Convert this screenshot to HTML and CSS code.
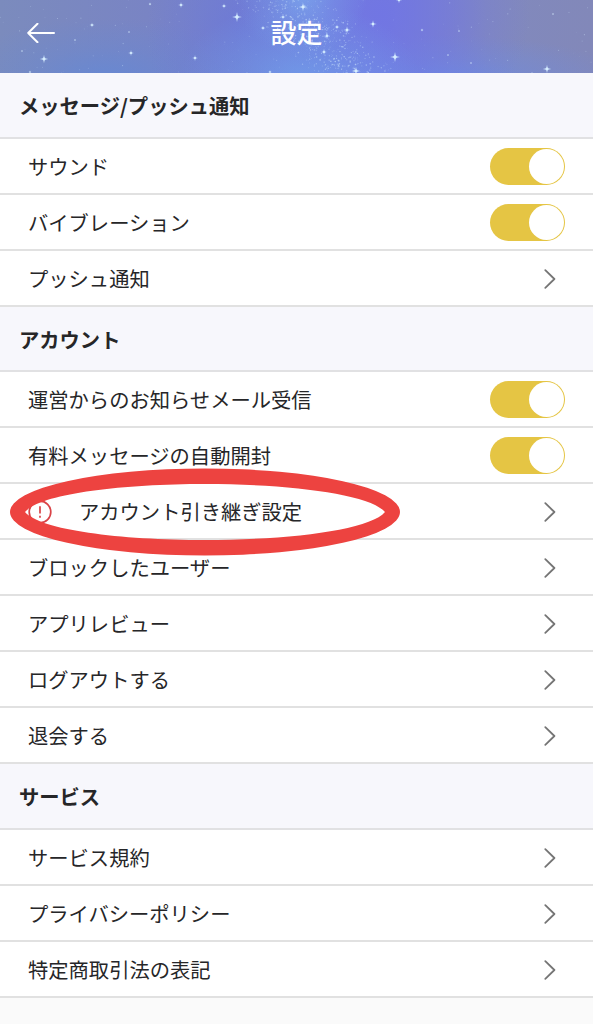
FILE: index.html
```
<!DOCTYPE html>
<html lang="ja">
<head>
<meta charset="utf-8">
<title>設定</title>
<link rel="stylesheet" href="styles.css">
</head>
<body>
<svg class="defs" aria-hidden="true">
  <symbol id="chevron" viewBox="0 0 12 20"><path d="M1.3 1.2 10.4 10 1.3 18.8"/></symbol>
  <symbol id="star" viewBox="-6 -6 12 12"><path d="M0-5 .8-.8 5 0 .8.8 0 5-.8.8-5 0-.8-.8Z"/><circle r="1.7"/></symbol>
</svg>
<header class="topbar">
  <svg class="sky" id="sky" viewBox="0 0 593 73" aria-hidden="true"></svg>
  <svg class="back" viewBox="0 0 28 20"><path d="M27 10H1.2M10.5.8 1.2 10l9.3 9.2"/></svg>
  <h1 class="title">設定</h1>
</header>
<main>
  <section>
    <h2 class="heading heading-first">メッセージ/プッシュ通知</h2>
    <ul class="list">
      <li class="row"><span>サウンド</span><i class="toggle"></i></li>
      <li class="row"><span>バイブレーション</span><i class="toggle"></i></li>
      <li class="row"><span>プッシュ通知</span><svg class="chevron"><use href="#chevron"/></svg></li>
    </ul>
  </section>
  <section>
    <h2 class="heading">アカウント</h2>
    <ul class="list">
      <li class="row"><span>運営からのお知らせメール受信</span><i class="toggle"></i></li>
      <li class="row"><span>有料メッセージの自動開封</span><i class="toggle"></i></li>
      <li class="row row-alert">
        <svg class="alert" viewBox="0 0 24 24"><circle cx="12" cy="12" r="10.8"/><path d="M12 6.3v7.2M12 15.8v2"/></svg>
        <span>アカウント引き継ぎ設定</span><svg class="chevron"><use href="#chevron"/></svg>
        <svg class="ring" viewBox="0 0 390 88"><path fill-rule="evenodd" d="M0 44a195 43.5 0 0 1 390 0 195 43.5 0 0 1-390 0ZM15 44C30 26 110 16 195 16s165 10 180 28c-15 18-95 28-180 28S30 62 15 44Z"/></svg>
      </li>
      <li class="row"><span>ブロックしたユーザー</span><svg class="chevron"><use href="#chevron"/></svg></li>
      <li class="row"><span>アプリレビュー</span><svg class="chevron"><use href="#chevron"/></svg></li>
      <li class="row"><span>ログアウトする</span><svg class="chevron"><use href="#chevron"/></svg></li>
      <li class="row"><span>退会する</span><svg class="chevron"><use href="#chevron"/></svg></li>
    </ul>
  </section>
  <section>
    <h2 class="heading heading-last">サービス</h2>
    <ul class="list">
      <li class="row"><span>サービス規約</span><svg class="chevron"><use href="#chevron"/></svg></li>
      <li class="row"><span>プライバシーポリシー</span><svg class="chevron"><use href="#chevron"/></svg></li>
      <li class="row"><span>特定商取引法の表記</span><svg class="chevron"><use href="#chevron"/></svg></li>
    </ul>
  </section>
</main>
<script src="sky.js"></script>
</body>
</html>
```
FILE: styles.css
```
* { box-sizing: border-box; }
body {
  margin: 0;
  background: #fafafa;
  color: #262628;
  font-family: "Noto Sans CJK JP", "Noto Sans", sans-serif;
}
.defs { display: none; }
.topbar {
  position: relative;
  display: grid;
  grid-template-columns: 1fr auto 1fr;
  align-items: center;
  height: 73px;
  padding: 0 27px 7px;
  overflow: hidden;
  background:
    radial-gradient(ellipse 65px 60px at 302px -4px, rgba(125,180,242,.65), rgba(125,180,242,.25) 50%, transparent),
    radial-gradient(ellipse 120px 75px at 300px 78px, rgba(112,160,235,.75), rgba(112,160,235,.35) 50%, transparent),
    radial-gradient(ellipse 150px 130px at 380px 15px, rgba(112,116,230,.75), rgba(112,116,230,.4) 50%, transparent),
    radial-gradient(ellipse 90px 110px at 236px 30px, rgba(108,119,216,.6), rgba(108,119,216,.25) 50%, transparent),
    radial-gradient(ellipse 150px 60px at 105px 78px, rgba(98,137,215,.75), rgba(98,137,215,.3) 50%, transparent),
    radial-gradient(ellipse 190px 45px at 440px 80px, rgba(108,140,228,.85), rgba(108,140,228,.35) 50%, transparent),
    linear-gradient(90deg, #7b8bbd, #7984c4 25%, #727fd2 43%, #757cda 65%, #8189be 82%, #8288b9);
}
.sky { position: absolute; inset: 0; width: 100%; height: 100%; fill: #d5edff; }
.back {
  position: relative;
  width: 28px;
  height: 20px;
  fill: none;
  stroke: #fff;
  stroke-width: 2;
  stroke-linecap: round;
  stroke-linejoin: round;
}
.title {
  position: relative;
  grid-column: 2;
  margin: 0;
  padding-bottom: 2px;
  color: #fff;
  font-size: 26px;
  font-weight: 500;
  line-height: 36px;
}
.heading {
  display: flex;
  align-items: center;
  height: 65px;
  margin: 0;
  padding: 0 19px;
  border-bottom: 2px solid #e1e1e3;
  background: #f7f7fc;
  font-size: 20.3px;
  font-weight: 700;
  line-height: 30px;
}
.heading-first,
.heading-last { height: 66px; }
.list { margin: 0; padding: 0; list-style: none; }
.row {
  position: relative;
  display: flex;
  align-items: center;
  justify-content: space-between;
  height: 56px;
  padding: 1px 28px 0;
  border-bottom: 2px solid #e1e1e1;
  background: #fff;
  font-size: 20.3px;
  line-height: 31px;
  white-space: nowrap;
}
.toggle {
  display: flex;
  justify-content: flex-end;
  width: 75px;
  height: 37px;
  padding: 1px;
  border-radius: 19px;
  background: #e5c544;
}
.toggle::after {
  content: "";
  width: 35px;
  height: 35px;
  border-radius: 50%;
  background: #fff;
}
.chevron {
  width: 12px;
  height: 20px;
  margin-right: 9px;
  fill: none;
  stroke: #757575;
  stroke-width: 1.8;
  stroke-linecap: round;
  stroke-linejoin: round;
}
.row-alert { justify-content: flex-start; }
.row-alert .chevron { margin-left: auto; }
.alert {
  width: 24px;
  height: 24px;
  margin-right: 27px;
  fill: none;
  stroke: #d94347;
  stroke-width: 1.7;
}
.ring {
  position: absolute;
  z-index: 1;
  top: -16px;
  left: 10px;
  width: 390px;
  height: 88px;
  fill: #ed4340;
}
```
FILE: sky.js
```
const sky = document.getElementById("sky");
let seed = 17;
const random = () => (seed = (seed * 16807) % 2147483647) / 2147483647;
const spread = () => random() + random() + random() - 1.5;

function dot(x, y, r, opacity) {
  return `<circle cx="${x}" cy="${y}" r="${r}" opacity="${opacity}"/>`;
}
function star(x, y, size) {
  return `<use href="#star" x="${x - size / 2}" y="${y - size / 2}" width="${size}" height="${size}"/>`;
}

let art = "";
// Faint dust over the whole bar
for (let i = 0; i < 120; i++) {
  art += dot(random() * 593, random() * 73, 0.3 + random() * 0.35, 0.15 + random() * 0.3);
}
// Dense band running down through the centre
for (let i = 0; i < 500; i++) {
  const y = random() * 73;
  art += dot(284 + y * 0.95 + spread() * 40, y, 0.35 + random() * 0.5, 0.12 + random() * 0.4);
}
const bright = [
  [44, 59, 10], [237, 17, 12], [181, 5, 7], [224, 6, 6], [92, 25, 6], [131, 53, 7],
  [195, 58, 7], [150, 4, 4], [129, 32, 3], [263, 28, 6], [283, 17, 6], [303, 7, 10],
  [347, 30, 9], [337, 27, 6], [327, 36, 8], [324, 52, 7], [373, 24, 9], [395, 57, 12],
  [399, 0, 8], [356, 71, 10], [547, 69, 10], [270, 72, 5], [422, 30, 4], [75, 40, 3],
  [448, 55, 3], [459, 31, 3], [471, 63, 3], [553, 14, 3], [30, 72, 4], [22, 51, 3]
];
for (const [x, y, size] of bright) art += star(x, y, size);
sky.innerHTML = art;
```
